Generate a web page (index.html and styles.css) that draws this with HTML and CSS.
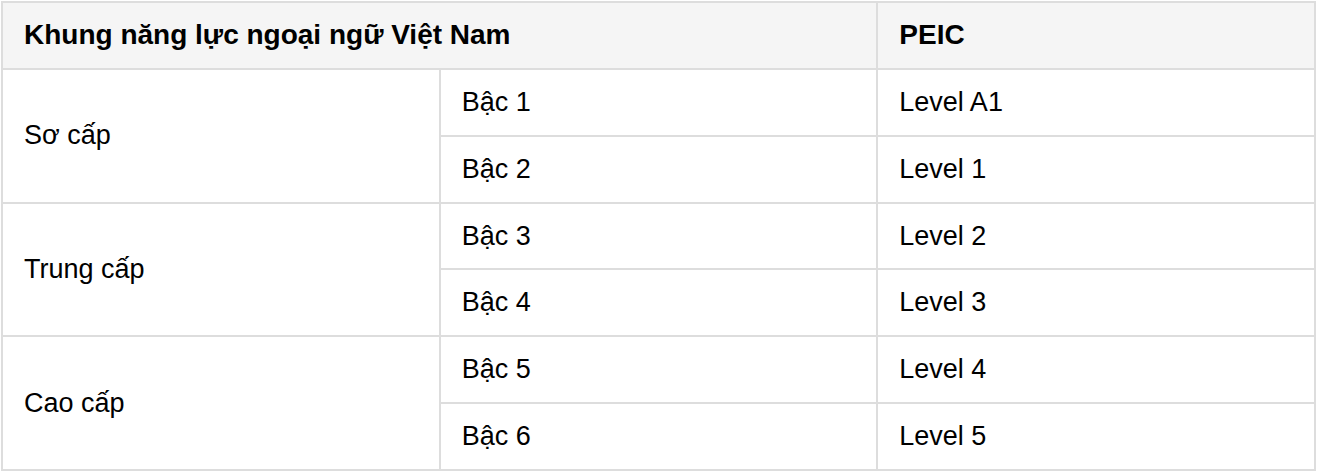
FILE: index.html
```html
<!DOCTYPE html>
<html lang="vi">
<head>
<meta charset="utf-8">
<link rel="stylesheet" href="styles.css">
</head>
<body>
<table class="levels">
  <thead>
    <tr class="head-row">
      <th class="cell head" colspan="2">Khung năng lực ngoại ngữ Việt Nam</th>
      <th class="cell head">PEIC</th>
    </tr>
  </thead>
  <tbody>
    <tr>
      <td class="cell" rowspan="2">Sơ cấp</td>
      <td class="cell">Bậc 1</td>
      <td class="cell">Level A1</td>
    </tr>
    <tr>
      <td class="cell">Bậc 2</td>
      <td class="cell">Level 1</td>
    </tr>
    <tr>
      <td class="cell" rowspan="2">Trung cấp</td>
      <td class="cell">Bậc 3</td>
      <td class="cell">Level 2</td>
    </tr>
    <tr>
      <td class="cell">Bậc 4</td>
      <td class="cell">Level 3</td>
    </tr>
    <tr>
      <td class="cell" rowspan="2">Cao cấp</td>
      <td class="cell">Bậc 5</td>
      <td class="cell">Level 4</td>
    </tr>
    <tr>
      <td class="cell">Bậc 6</td>
      <td class="cell">Level 5</td>
    </tr>
  </tbody>
</table>
</body>
</html>
```

FILE: styles.css
```css
html, body {
  margin: 0;
  background: #ffffff;
}
body {
  padding: 1px;
  font-family: "Liberation Sans", Arial, sans-serif;
  color: #000;
}
.levels {
  width: 1315px;
  border-collapse: collapse;
  table-layout: fixed;
  border: 2px solid #dddddd;
}
.cell {
  border: 2px solid #dddddd;
  padding: 15px 21px;
  font-size: 27px;
  line-height: 34.85px;
  text-align: left;
  vertical-align: middle;
  font-weight: normal;
}
.head-row {
  background: #f5f5f5;
}
.cell.head {
  font-weight: bold;
  font-size: 28px;
}
```
